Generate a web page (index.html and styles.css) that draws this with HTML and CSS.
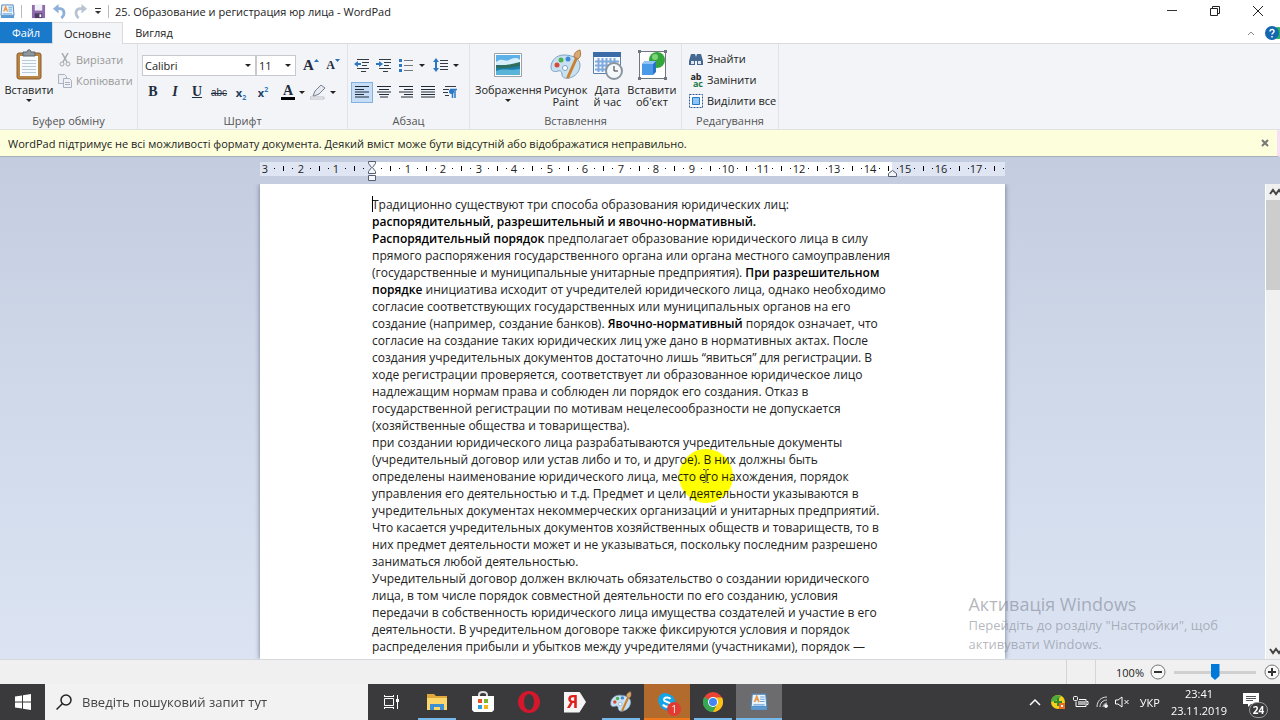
FILE: index.html
```
<!DOCTYPE html>
<html lang="uk">
<head>
  <meta charset="UTF-8">
  <meta name="viewport" content="width=device-width, initial-scale=1">
  <title>WordPad</title>
  <link rel="stylesheet" href="styles.css">
</head>
<body>
  <!-- shared icons -->
  <svg class="defs" width="0" height="0" aria-hidden="true">
    <symbol id="i-doc" viewBox="0 0 16 16">
      <path d="M2 1h12l1 11H1z" fill="#e9f3fc" stroke="#4f86b8"/>
      <path d="m4 8 2-5 2 5M5 6h2" fill="none" stroke="#ec9a4a" stroke-width="1.500"/>
      <path d="M9 3.500h4M9 5.500h4M9 7.500h4M3 10.500h10" stroke="#6aa5dc"/>
      <path d="M1 12h14v3H1z" fill="#5b9bd5"/>
    </symbol>
    <symbol id="i-palette" viewBox="0 0 32 32">
      <path d="M14 6C6 6 1 12 1 18c0 5 4 5 7 4s4 1 4 4c1 4 6 4 10 2 5-2 8-7 8-12 0-6-7-10-16-10z" fill="#c9e0f1" stroke="#7aa3c6"/>
      <circle cx="7" cy="16" r="2.500" fill="#d84b38"/><circle cx="11" cy="11" r="2.500" fill="#4caf50"/>
      <circle cx="18" cy="10" r="2.500" fill="#3f87d9"/><circle cx="15" cy="19" r="2.500" fill="#fff" stroke="#7aa3c6"/>
      <path d="M27 8 18 28" stroke="#c9822f" stroke-width="3" stroke-linecap="round"/>
      <path d="M24 8c0-4 2-6 6-7 1 4 1 7-2 9z" fill="#d9a873" stroke="#a87843"/>
    </symbol>
  </svg>

  <div class="app">
    <header class="titlebar">
      <svg class="ic16" aria-hidden="true"><use href="#i-doc"/></svg>
      <span class="vsep"></span>
      <button class="quick" aria-label="Зберегти"><svg viewBox="0 0 16 16" width="15" height="15"><path d="M1 1h14v14H1z" fill="#8d6cab"/><path d="M4 1h8v6H4z" fill="#f3eff8"/><path d="M4 10h8v5H4z" fill="#4e3b63"/><path d="M9 11h2v3H9z" fill="#fff"/></svg></button>
      <button class="quick" aria-label="Скасувати"><svg viewBox="0 0 16 16" width="15" height="15"><path d="M4 5h4c6 0 6 7 2 10" fill="none" stroke="#8fb0d8" stroke-width="3"/><path d="M7 0v10L1 5z" fill="#8fb0d8"/></svg></button>
      <button class="quick" aria-label="Повторити"><svg viewBox="0 0 16 16" width="15" height="15"><path d="M12 5H8c-6 0-6 7-2 10" fill="none" stroke="#b9c4d3" stroke-width="3"/><path d="M9 0v10l6-5z" fill="#b9c4d3"/></svg></button>
      <button class="quick" aria-label="Настроїти"><svg viewBox="0 0 8 8" width="8" height="8"><path d="M1 1.500h6" stroke="#333"/><path d="M1 4h6L4 7z" fill="#333"/></svg></button>
      <span class="vsep"></span>
      <span class="title">25. Образование и регистрация юр лица - WordPad</span>
      <div class="win-buttons">
        <button aria-label="Згорнути"><svg width="12" height="12"><path d="M1 5.500h10" stroke="#333"/></svg></button>
        <button aria-label="Розгорнути"><svg width="12" height="12" fill="none" stroke="#222"><path d="M1.500 3.500h7v7h-7zM3.500 3V1.500h7v7H9"/></svg></button>
        <button aria-label="Закрити"><svg width="12" height="12"><path d="m1 1 10 10M11 1 1 11" stroke="#222"/></svg></button>
      </div>
    </header>

    <nav class="tabs">
      <button class="tab file">Файл</button>
      <button class="tab active">Основне</button>
      <button class="tab">Вигляд</button>
      <div class="tabs-right">
        <button aria-label="Згорнути стрічку"><svg width="8" height="6"><path d="m1 5 3-3 3 3" fill="none" stroke="#888"/></svg></button>
        <button aria-label="Довідка"><svg width="15" height="14"><circle cx="13" cy="7" r="6" fill="#27b45f"/><circle cx="7" cy="7" r="7" fill="#1467b0"/><path d="M5 5.500C5 2.500 9.500 3 9 5.500 8.800 7 7 7 7 8.500M7 10v1.500" fill="none" stroke="#fff" stroke-width="1.500"/></svg></button>
      </div>
    </nav>

    <section class="ribbon">
      <div class="group clipboard">
        <div class="tools">
          <button class="big">
            <svg viewBox="0 0 26 32" width="26" height="32"><rect x="1" y="4" width="24" height="26" rx="2" fill="#b98545" stroke="#8a5d2a"/><path d="M4 7h18v20H4z" fill="#f8fbfd"/><path d="M6 11.500h14M6 14.500h14M6 17.500h14M6 20.500h14M6 23.500h14" stroke="#b9c9d8"/><path d="M7 3h4c0-3 4-3 4 0h4v4H7z" fill="#8e969e" stroke="#5f666e"/></svg>
            <span>Вставити</span><i class="caret"></i>
          </button>
          <div class="list">
            <button class="small off"><svg viewBox="0 0 14 14" width="14" height="14" fill="none" stroke="#a5a8ad"><path d="m4 0 5 9M10 0 5 9" stroke-width="1.500"/><circle cx="4" cy="11" r="2"/><circle cx="10" cy="11" r="2"/></svg>Вирізати</button>
            <button class="small off"><svg viewBox="0 0 14 14" width="14" height="14" fill="#eef0f4" stroke="#a9b1c2"><path d="M.5.5h6l2 2v7h-8z"/><path d="M5.500 4.500h6l2 2v7h-8z"/><path d="M7 8.500h5M7 10.500h5"/></svg>Копіювати</button>
          </div>
        </div>
        <div class="caption">Буфер обміну</div>
      </div>

      <div class="group font">
        <div class="tools rows">
          <div class="row">
            <div class="combos">
              <label class="combo name"><input type="text" value="Calibri" aria-label="Шрифт"><i class="caret"></i></label>
              <label class="combo size"><input type="text" value="11" aria-label="Розмір"><i class="caret"></i></label>
            </div>
            <button class="ico serif grow" aria-label="Збільшити">A<svg width="5" height="12"><path d="M0 3h5L2.500 0z" fill="#2a6db5"/></svg></button>
            <button class="ico serif shrink" aria-label="Зменшити">A<svg width="5" height="12"><path d="M0 0h5L2.500 3z" fill="#2a6db5"/></svg></button>
          </div>
          <div class="row format">
            <button class="ico serif"><b>B</b></button>
            <button class="ico serif"><em>I</em></button>
            <button class="ico serif"><u>U</u></button>
            <button class="ico strike"><s>abc</s></button>
            <button class="ico script"><span>x<sub>2</sub></span></button>
            <button class="ico script"><span>x<sup>2</sup></span></button>
            <button class="ico serif color"><span>A</span><i class="caret"></i></button>
            <button class="ico marker" aria-label="Виділення"><svg viewBox="0 0 16 15" width="16" height="15"><path d="m3 11 2-5 6-6 4 3-6 6-5 2z" fill="#e6ebf1" stroke="#76818f"/><path d="M0 12h14v2H0z" fill="#fff" stroke="#b6bcc4"/></svg><i class="caret"></i></button>
          </div>
        </div>
        <div class="caption">Шрифт</div>
      </div>

      <div class="group para">
        <div class="tools rows">
          <div class="row">
            <button class="ico" aria-label="Зменшити відступ"><svg width="16" height="14" stroke="#333a44"><path d="M3 1.500h12M8 4.500h7M8 7.500h5M3 10.500h12M7 13.500h5"/><path d="M0 6l4-3v2h3v2H4v2z" fill="#2a78c5" stroke="none"/></svg></button>
            <button class="ico" aria-label="Збільшити відступ"><svg width="16" height="14" stroke="#333a44"><path d="M3 1.500h12M8 4.500h7M8 7.500h5M3 10.500h12M7 13.500h5"/><path d="M7 6 3 3v2H0v2h3v2z" fill="#2a78c5" stroke="none"/></svg></button>
            <button class="ico wide" aria-label="Список"><svg width="16" height="14"><path d="M5 2.500h9M5 7.500h9M5 12.500h9" stroke="#70777f"/><path d="M0 1h3v3H0zM0 6h3v3H0zM0 11h3v3H0z" fill="#2a78c5"/></svg><i class="caret"></i></button>
            <button class="ico wide" aria-label="Інтервал"><svg width="16" height="16"><path d="M7 3.500h8M7 6.500h8M7 9.500h8M7 12.500h8" stroke="#333a44"/><path d="M0 5l3-4 3 4H4v6h2l-3 4-3-4h2V5z" fill="#2a78c5"/></svg><i class="caret"></i></button>
          </div>
          <div class="row aligns">
            <button class="ico on" aria-label="Ліворуч"><svg width="14" height="12" stroke="#222b38"><path d="M0 .5h14M0 3.500h9M0 6h14M0 8.500h9M0 11h14"/></svg></button>
            <button class="ico" aria-label="По центру"><svg width="14" height="12" stroke="#222b38"><path d="M0 .5h14M2 3.500h10M0 6h14M2 8.500h10M3 11h8"/></svg></button>
            <button class="ico" aria-label="Праворуч"><svg width="14" height="12" stroke="#222b38"><path d="M0 .5h14M5 3.500h9M0 6h14M5 8.500h9M2 11h12"/></svg></button>
            <button class="ico" aria-label="По ширині"><svg width="14" height="12" stroke="#222b38"><path d="M0 .5h14M0 3.500h14M0 6h14M0 8.500h14M0 11h14"/></svg></button>
            <button class="ico" aria-label="Абзац"><svg width="14" height="14"><path d="M2 1.500h11M0 4.500h6M0 7.500h5M2 10.500h4" stroke="#333a44"/><path d="M9.500 4v9M12 4v9M7 4.500h7" stroke="#2a78c5" stroke-width="1.500"/><circle cx="8.500" cy="6.500" r="2.500" fill="#2a78c5"/></svg></button>
          </div>
        </div>
        <div class="caption">Абзац</div>
      </div>

      <div class="group insert">
        <div class="tools">
          <button class="big">
            <svg viewBox="0 0 32 32" width="32" height="32"><path d="M2.500 4.500h27v23h-27z" fill="#fff" stroke="#9aa2aa"/><path d="M4 6h24v9H4z" fill="#5db1e8"/><path d="M4 13c6-5 9 0 13-2s8-3 11 0v5H4z" fill="#d8eefa"/><path d="M4 16h24v10H4z" fill="#1c7fae"/><path d="M28 13v4c-8 1-14 3-24 2v-3c9 1 16-1 24-3z" fill="#2f6d5c"/><path d="M4 22c8-3 14 0 24-2v6H4z" fill="#5ab4d8"/></svg>
            <span>Зображення</span><i class="caret"></i>
          </button>
          <button class="big">
            <svg width="32" height="32"><use href="#i-palette"/></svg>
            <span>Рисунок<br>Paint</span>
          </button>
          <button class="big">
            <svg viewBox="0 0 32 32" width="32" height="32"><path d="M2.500 3.500h27v21h-27z" fill="#f7fbff" stroke="#5c7fa8"/><path d="M2 3h28v5H2z" fill="#3c6ca8"/><path d="M4 12.500h24M4 16.500h24M4 20.500h24M7.500 9v14M11.500 9v14M15.500 9v14M19.500 9v14M23.500 9v14" stroke="#7fa9dc" stroke-width="2"/><circle cx="23" cy="22" r="8" fill="#f5f8fb" stroke="#8b959f" stroke-width="2"/><path d="M23 17v5h4" fill="none" stroke="#333"/></svg>
            <span>Дата<br>й час</span>
          </button>
          <button class="big">
            <svg viewBox="0 0 32 32" width="32" height="32"><path d="M3.500 2.500h26v27h-26z" fill="#fff" stroke="#70777f"/><path d="M2 1h3v3H2zM28 1h3v3h-3zM2 28h3v3H2zM28 28h3v3h-3z" fill="#70777f"/><circle cx="21" cy="11" r="8" fill="#34a53a"/><circle cx="19" cy="8" r="3" fill="#7fd47a"/><path d="m6 15 3-3h11v11l-3 3H6z" fill="#2673c9"/><path d="m6 15 3-3h11l-3 3z" fill="#8fc4f5"/><path d="M6 15h11v11H6z" fill="#4a9ae8"/></svg>
            <span>Вставити<br>об'єкт</span>
          </button>
        </div>
        <div class="caption">Вставлення</div>
      </div>

      <div class="group edit">
        <div class="tools">
          <div class="list">
            <button class="small"><svg viewBox="0 0 14 14" width="14" height="14" fill="#46678f"><path d="M2 2h4l1 3 1-3h4l2 7v4H8V9H6v4H0V9z"/><path d="M2 9h3v3H2zM9 9h3v3H9z" fill="#dce7f3"/></svg>Знайти</button>
            <button class="small replace"><span class="abac"><b>ab</b><b>ac</b></span>Замінити</button>
            <button class="small"><svg viewBox="0 0 14 14" width="14" height="14"><path d="M.5.5h13v13H.5z" fill="#fff" stroke="#2a5a94" stroke-dasharray="2 1"/><path d="M3.500 3.500h7v7h-7z" fill="#8cc5f7" stroke="#2a78c5"/></svg>Виділити все</button>
          </div>
        </div>
        <div class="caption">Редагування</div>
      </div>
    </section>

    <div class="notice">
      <span>WordPad підтримує не всі можливості формату документа. Деякий вміст може бути відсутній або відображатися неправильно.</span>
      <button aria-label="Закрити"><svg width="8" height="8"><path d="m1 1 6 6M7 1 1 7" stroke="#777" stroke-width="2"/></svg></button>
    </div>

    <main class="workspace">
      <div class="ruler-row">
        <svg class="ruler" id="ruler" width="745" height="24"></svg>
      </div>
      <div class="canvas">
        <article class="page">
          <p>Традиционно существуют три способа образования юридических лиц:<br>
            <b>распорядительный, разрешительный и явочно-нормативный.</b></p>
          <p><b>Распорядительный порядок</b> предполагает образование юридического лица в силу<br>
            прямого распоряжения государственного органа или органа местного самоуправления<br>
            (государственные и муниципальные унитарные предприятия). <b>При разрешительном<br>
            порядке</b> инициатива исходит от учредителей юридического лица, однако необходимо<br>
            согласие соответствующих государственных или муниципальных органов на его<br>
            создание (например, создание банков). <b>Явочно-нормативный</b> порядок означает, что<br>
            согласие на создание таких юридических лиц уже дано в нормативных актах. После<br>
            создания учредительных документов достаточно лишь “явиться” для регистрации. В<br>
            ходе регистрации проверяется, соответствует ли образованное юридическое лицо<br>
            надлежащим нормам права и соблюден ли порядок его создания. Отказ в<br>
            государственной регистрации по мотивам нецелесообразности не допускается<br>
            (хозяйственные общества и товарищества).</p>
          <p>при создании юридического лица разрабатываются учредительные документы<br>
            (учредительный договор или устав либо и то, и другое). В них должны быть<br>
            определены наименование юридического лица, место его нахождения, порядок<br>
            управления его деятельностью и т.д. Предмет и цели деятельности указываются в<br>
            учредительных документах некоммерческих организаций и унитарных предприятий.<br>
            Что касается учредительных документов хозяйственных обществ и товариществ, то в<br>
            них предмет деятельности может и не указываться, поскольку последним разрешено<br>
            заниматься любой деятельностью.</p>
          <p>Учредительный договор должен включать обязательство о создании юридического<br>
            лица, в том числе порядок совместной деятельности по его созданию, условия<br>
            передачи в собственность юридического лица имущества создателей и участие в его<br>
            деятельности. В учредительном договоре также фиксируются условия и порядок<br>
            распределения прибыли и убытков между учредителями (участниками), порядок —</p>
          <div class="pointer"><svg width="8" height="16"><path d="M1 1.500h2l1 1 1-1h2M4 2v12M1 14.500h2l1-1 1 1h2" fill="none" stroke="#555"/></svg></div>
        </article>
      </div>
      <div class="scrollbar">
        <svg width="14" height="16"><path d="m4 10 3-4 3 4 3-4 3 4" fill="none" stroke="#444" stroke-width="2"/></svg>
        <div class="thumb"></div>
        <svg width="14" height="16"><path d="m4 6 3 4 3-4 3 4 3-4" fill="none" stroke="#444" stroke-width="2"/></svg>
      </div>
      <div class="activation">
        <h2>Активація Windows</h2>
        <p>Перейдіть до розділу "Настройки", щоб<br>активувати Windows.</p>
      </div>
    </main>

    <footer class="status">
      <span class="cell"></span>
      <span class="zoom">100%</span>
      <button class="round" aria-label="Зменшити масштаб"><svg width="16" height="16"><circle cx="8" cy="8" r="7" fill="#f7f7f7" stroke="#777"/><path d="M4 8h8" stroke="#333" stroke-width="2"/></svg></button>
      <input class="slider" type="range" min="0" max="100" value="50" aria-label="Масштаб">
      <button class="round" aria-label="Збільшити масштаб"><svg width="16" height="16"><circle cx="8" cy="8" r="7" fill="#f7f7f7" stroke="#777"/><path d="M4 8h8M8 4v8" stroke="#333" stroke-width="2"/></svg></button>
    </footer>

    <div class="taskbar">
      <button class="start" aria-label="Пуск"><svg viewBox="0 0 16 16" width="16" height="16" fill="#fff"><path d="m0 2.500 7-1v6H0zM8 1.300 16 0v7.500H8zM0 8.500h7v6l-7-1zM8 8.500h8V16l-8-1.300z"/></svg></button>
      <div class="search">
        <svg width="16" height="16" fill="none" stroke="#222" stroke-width="1.500"><circle cx="10" cy="6" r="5"/><path d="m6.500 9.500-6 6"/></svg>
        <input type="text" placeholder="Введіть пошуковий запит тут" aria-label="Пошук">
      </div>
      <div class="apps">
        <button aria-label="Подання завдань"><svg width="16" height="16" fill="none" stroke="#fff"><path d="M1.500 4.500h9v7h-9zM1.500 1v2M10.500 1v2M1 2.500h10M1.500 15v-2M10.500 15v-2M1 13.500h10M14.500 1v14"/><path d="M13 5h3v3h-3z" fill="#fff" stroke="none"/></svg></button>
        <button class="open" aria-label="Провідник"><svg width="20" height="18"><path d="M0 1h7l2 2h11v14H0z" fill="#e2a93a"/><path d="M0 5h20v12H0z" fill="#fbd66b"/><path d="M3 17v-6h14v6h-4v-3H7v3z" fill="#3d8fd1"/></svg></button>
        <button aria-label="Магазин"><svg width="22" height="22"><path d="M7 7V4c0-4 8-4 8 0v3" fill="none" stroke="#ddd" stroke-width="2"/><path d="M0 5h22v14l-2 2H2l-2-2z" fill="#fff"/><path d="M6 8h4v4H6z" fill="#e8502c"/><path d="M12 8h4v4h-4z" fill="#7db72f"/><path d="M6 14h4v4H6z" fill="#2c9fe0"/><path d="M12 14h4v4h-4z" fill="#f6b61b"/></svg></button>
        <button aria-label="Opera"><svg width="22" height="22"><circle cx="11" cy="11" r="11" fill="#d3172c"/><ellipse cx="11" cy="11" rx="5" ry="8" fill="#3a3a3c"/></svg></button>
        <button aria-label="Яндекс"><span class="ya">Я</span></button>
        <button class="open" aria-label="Paint"><svg width="22" height="22"><use href="#i-palette"/></svg></button>
        <button class="open skype" aria-label="Skype"><svg width="20" height="20"><circle cx="8" cy="8" r="7" fill="#12a5e8"/><circle cx="12" cy="12" r="7" fill="#0b93d5"/><circle cx="10" cy="10" r="8" fill="#12a5e8"/><path d="M13.500 7C12 4.500 6.500 5 7 8c.5 2.500 6.500 1.500 6.500 4.500 0 3-6 3-7.500 0" fill="none" stroke="#fff" stroke-width="2"/></svg><span class="badge">1</span></button>
        <button class="open" aria-label="Chrome"><svg viewBox="0 0 20 20" width="20" height="20"><circle cx="10" cy="10" r="10" fill="#ea4335"/><path d="M10 10 1.300 5A10 10 0 0 0 10 20l4.300-7.500z" fill="#34a853"/><path d="M10 5.500h9a10 10 0 0 1-9 14.500l4-7.500z" fill="#fbc116"/><circle cx="10" cy="10" r="5" fill="#fff"/><circle cx="10" cy="10" r="4" fill="#4285f4"/></svg></button>
        <button class="open current" aria-label="WordPad"><svg width="18" height="18"><use href="#i-doc"/></svg></button>
      </div>
      <div class="tray">
        <svg width="12" height="8"><path d="m1 7 5-5 5 5" fill="none" stroke="#fff" stroke-width="1.500"/></svg>
        <svg width="16" height="16"><circle cx="8" cy="8" r="7" fill="#f4cf1b"/><path d="M1 8c0-5 5-8 10-6L8 6z" fill="#4fa83d"/><path d="M7 4h2v3h3v2H9v3H7V9H4V7h3z" fill="#2e8b2e"/><path d="M9 9h6v6H9z" fill="#ee6a1f"/><path d="M11 11h2v2h-2z" fill="#fff"/></svg>
        <svg width="16" height="12" fill="none" stroke="#fff"><path d="M3 5.500v5h10v-7H6M13.500 5.500h1.500v3h-1.500"/><path d="M5 5h7v4H5z" fill="#aaa" stroke="none"/><rect x=".5" y=".5" width="4" height="4" rx="1"/></svg>
        <svg width="12" height="12" fill="none" stroke="#ddd"><path d="M1 11C1 5 5 1 11 1M4 11c0-4 3-7 7-7M7 11c0-2 2-4 4-4"/><circle cx="10" cy="10" r="1.500" fill="#fff"/></svg>
        <svg width="14" height="12" fill="none" stroke="#fff"><path d="M.5 4v4H3l4 3V1L3 4zM9.500 4l4 4M13.500 4l-4 4"/></svg>
        <span class="lang">УКР</span>
        <time class="clock">23:41<br>23.11.2019</time>
        <div class="notify"><svg width="16" height="16"><path d="M0 1h16v11H8l-3 3v-3H0z" fill="#fff"/><path d="M3 4.500h10M3 6.500h10M3 8.500h7" stroke="#555"/></svg><span>24</span></div>
      </div>
    </div>
  </div>

  <script>
    // centimetre scale: zero stands at the left margin of the text
    const ZERO = 112, CM = 35.55;
    let marks = '<rect y="5" width="745" height="14" fill="#dfe5f2"/><rect x="112" y="5" width="520" height="14" fill="#fff"/>';
    for (let n = -3; n <= 17; n++) {
      const x = Math.round(ZERO + n * CM);
      if (n !== 0) marks += `<text x="${x}" y="16" text-anchor="middle">${Math.abs(n)}</text>`;
      [9, 18, 27].forEach((d, i) => {
        if (x + d > 743) return;
        marks += i === 1 ? `<rect x="${x + d}" y="9" width="1" height="5"/>` : `<rect x="${x + d}" y="11" width="1" height="1"/>`;
      });
    }
    marks += '<path class="stop" d="M108.500 4.500h7v2l-3 4 3 4v2h-7v-2l3-4-3-4zM108.500 18.500h7v5h-7zM628.500 19.500v-3l4-3 4 3v3z"/>';
    document.getElementById('ruler').innerHTML = marks;
  </script>
</body>
</html>
```
FILE: styles.css
```
* { box-sizing: border-box; }

body {
  margin: 0;
  font-family: "Open Sans", "Noto Sans", sans-serif;
  font-size: 11px;
  color: #222;
}

button {
  margin: 0;
  padding: 0;
  border: none;
  background: none;
  font: inherit;
  color: inherit;
  display: flex;
  align-items: center;
  justify-content: center;
}

input { font: inherit; color: inherit; }
svg { display: block; flex: none; }
.defs { position: absolute; }

.app {
  height: 100vh;
  display: flex;
  flex-direction: column;
  overflow: hidden;
}

/* title bar */
.titlebar {
  height: 22px;
  flex: none;
  display: flex;
  align-items: center;
  gap: 6px;
  background: #fff;
}

.ic16 { width: 15px; height: 15px; }
.vsep { width: 1px; height: 13px; background: #bbb; }
.titlebar .vsep:first-of-type { margin-right: 3px; }
.title { white-space: nowrap; }

.win-buttons {
  margin-left: auto;
  display: flex;
  gap: 31px;
  padding-right: 16px;
}

/* tabs */
.tabs {
  height: 22px;
  flex: none;
  display: flex;
  background: #fff;
  border-bottom: 1px solid #dadbdc;
}

.tab { width: 62px; }
.tab.file { width: 52px; background: #1979ca; color: #fff; }

.tab.active {
  width: 71px;
  height: 22px;
  background: #f3f5f8;
  border: 1px solid #dadbdc;
  border-bottom: none;
}

.tabs-right {
  margin-left: auto;
  display: flex;
  gap: 10px;
}

/* ribbon */
.ribbon {
  height: 86px;
  flex: none;
  display: flex;
  background: #f2f4f7;
  border-bottom: 1px solid #dfe2e5;
}

.group {
  display: flex;
  flex-direction: column;
  border-right: 1px solid #e0e3e7;
}

.group .tools {
  flex: 1;
  display: flex;
  padding-top: 5px;
}

.caption {
  height: 16px;
  line-height: 16px;
  text-align: center;
  color: #555;
}

.clipboard { width: 138px; }
.font { width: 210px; }
.para { width: 122px; }
.insert { width: 212px; }
.edit { width: 97px; }

.caret {
  flex: none;
  border: 3px solid transparent;
  border-top-color: #222;
  border-bottom: none;
}

.big {
  flex-direction: column;
  justify-content: flex-start;
  line-height: 12px;
  text-align: center;
}

.big svg { margin-bottom: 3px; }
.big .caret { margin-top: 3px; }
.clipboard .big { width: 58px; }
.insert .tools { padding-left: 5px; gap: 2px; }
.insert .big:nth-child(3) { width: 36px; }

.list {
  display: flex;
  flex-direction: column;
}

.small {
  height: 21px;
  justify-content: flex-start;
  gap: 4px;
  white-space: nowrap;
}

.small.off { color: #999; }
.clipboard .list { padding-left: 0; }
.group.edit .tools { padding: 4px 0 0 7px; }

.abac {
  width: 14px;
  display: flex;
  flex-direction: column;
  font-size: 9px;
  line-height: 7px;
}

.abac b:last-child { text-align: right; color: #227a4b; }

.group .tools.rows {
  flex-direction: column;
  gap: 5px;
  padding-top: 10px;
}

.row {
  display: flex;
  align-items: center;
  height: 22px;
}

.font .row { padding-left: 4px; }
.combos { display: flex; margin-right: 4px; }

.combo {
  height: 21px;
  display: flex;
  align-items: center;
  padding-right: 4px;
  background: #fff;
  border: 1px solid #c6cad0;
}

.combo.name { width: 114px; }
.combo.size { width: 40px; }

.combo input {
  width: 100%;
  min-width: 0;
  padding: 0 2px;
  border: none;
  background: none;
}

.ico { width: 22px; height: 21px; gap: 4px; }

.serif {
  font-family: "Liberation Serif", serif;
  font-size: 14px;
  font-weight: bold;
  color: #1f2d40;
}

.grow, .shrink { gap: 0; }
.grow { font-size: 15px; }
.shrink { font-size: 12px; }
.strike { font-family: "Liberation Sans", sans-serif; font-size: 10px; color: #1f2d40; }

.script {
  font-weight: bold;
  color: #1f3f66;
}

.script sub, .script sup { font-size: 7px; line-height: 0; color: #2a78c5; }
.format .color { width: 30px; margin-left: 4px; }
.format .marker { width: 30px; }
.color span { line-height: 13px; border-bottom: 3px solid #000; padding: 0 2px; }

.para .row { padding-left: 3px; }
.para .ico.wide { width: 34px; }
.para .ico.on { background: #c5ddf5; border: 1px solid #84b2e0; }

/* notice */
.notice {
  height: 27px;
  flex: none;
  display: flex;
  align-items: center;
  justify-content: space-between;
  padding: 0 8px;
  background: #fdffdc;
  border-right: 3px solid #f7dff5;
  border-bottom: 1px solid #a9aeb8;
}

/* document area */
.workspace {
  position: relative;
  flex: 1;
  min-height: 0;
  display: grid;
  grid-template: 27px minmax(0, 1fr) / minmax(0, 1fr) 15px;
  background: linear-gradient(#c4cddf, #cdd7e8 40%, #dce4f3);
}

.ruler-row, .canvas {
  grid-column: 1;
  display: flex;
  justify-content: center;
}

.ruler text { font-size: 11px; fill: #222; }
.ruler .stop { fill: #f4f6fa; stroke: #555e70; }
.canvas { overflow: hidden; }

.page {
  position: relative;
  width: 745px;
  padding: 12px 112px 0;
  background: #fff;
  box-shadow: 0 0 5px #6b7488;
  font-size: 12px;
  line-height: 17px;
  color: #222;
  white-space: nowrap;
}

.page p { margin: 0; }
.page b { font-weight: 600; color: #000; }

/* text caret */
.page p:first-of-type::before {
  content: "";
  position: absolute;
  width: 1px;
  height: 16px;
  background: #000;
}

.pointer {
  position: absolute;
  left: 419px;
  top: 265px;
  width: 54px;
  height: 54px;
  border-radius: 50%;
  background: #ffff00;
  mix-blend-mode: multiply;
  display: flex;
  align-items: center;
  justify-content: center;
}

.scrollbar {
  grid-area: 2 / 2;
  display: flex;
  flex-direction: column;
  background: #f0f0f0;
  border-left: 1px solid #fff;
}

.thumb { height: 90px; margin-bottom: auto; background: #cdcdcd; }

.activation {
  position: absolute;
  right: 62px;
  bottom: 5px;
  color: rgba(130, 135, 145, 0.6);
}

.activation h2 { margin: 0; font-size: 18px; line-height: 24px; font-weight: normal; }
.activation p { margin: 0; font-size: 13px; line-height: 19px; }

/* status bar */
.status {
  height: 25px;
  flex: none;
  display: flex;
  align-items: center;
  justify-content: flex-end;
  background: #f0f0f0;
  border-top: 1px solid #d5d8dc;
}

.status .cell {
  width: 30px;
  height: 100%;
  border: 1px solid #d5d5d5;
  border-width: 0 1px;
}

.zoom { width: 48px; text-align: right; margin-right: 6px; }

.slider {
  appearance: none;
  width: 82px;
  height: 16px;
  margin: 0 8px;
  background: linear-gradient(#d0d0d0, #d0d0d0) center / 100% 3px no-repeat;
}

.slider::-webkit-slider-thumb {
  appearance: none;
  width: 9px;
  height: 16px;
  background: #0078d7;
  clip-path: polygon(0 0, 100% 0, 100% 75%, 50% 100%, 0 75%);
}

/* taskbar */
.taskbar {
  height: 36px;
  flex: none;
  display: flex;
  background: #3a3a3c;
  color: #fff;
}

.start { width: 45px; }

.search {
  width: 323px;
  display: flex;
  align-items: center;
  gap: 10px;
  padding-left: 11px;
  background: #f2f2f2;
}

.search input {
  flex: 1;
  min-width: 0;
  padding: 0;
  border: none;
  background: none;
  font-size: 13px;
  color: #333;
}

.search input::placeholder { color: #444; }
.apps { display: flex; }
.apps button { position: relative; width: 46px; }

.apps .open::after {
  content: "";
  position: absolute;
  left: 4px;
  right: 4px;
  bottom: 0;
  height: 2px;
  background: #76b9ed;
}

.apps .skype { background: #b36a2d; }
.apps .skype::after { left: 0; right: 0; background: #f07818; }
.apps .current { background: #6c6c6e; }
.apps .current::after { left: 0; right: 0; }

.badge {
  position: absolute;
  right: 9px;
  bottom: 4px;
  width: 14px;
  height: 14px;
  border-radius: 50%;
  background: #e23a30;
  font-size: 10px;
  line-height: 14px;
}

.ya {
  width: 22px;
  height: 21px;
  background: #f5f5f5;
  color: #e0211b;
  font-size: 17px;
  line-height: 20px;
  font-weight: bold;
  text-align: left;
  padding-left: 3px;
  clip-path: polygon(0 0, 70% 0, 100% 50%, 70% 100%, 0 100%);
}

.tray {
  margin-left: auto;
  display: flex;
  align-items: center;
  gap: 7px;
  padding-right: 12px;
}

.tray svg:first-child { margin-right: 2px; }
.lang { margin-left: 4px; font-size: 11px; }
.clock { margin-left: 4px; font-size: 11px; line-height: 17px; text-align: center; }
.notify { position: relative; width: 25px; height: 20px; margin-left: 9px; }

.notify span {
  position: absolute;
  right: 0;
  bottom: -6px;
  width: 19px;
  height: 16px;
  border: 1px solid #999;
  border-radius: 8px;
  background: #3a3a3c;
  font-size: 10px;
  line-height: 14px;
  font-weight: bold;
  text-align: center;
}
```
